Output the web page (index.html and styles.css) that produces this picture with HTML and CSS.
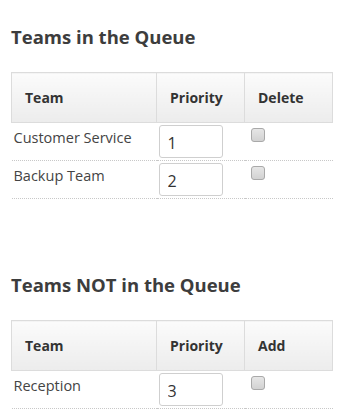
FILE: index.html
```html
<!DOCTYPE html>
<html>
<head>
<meta charset="utf-8">
<link rel="stylesheet" href="styles.css">
</head>
<body>
<div class="page">
  <section class="block">
    <h2 class="title">Teams in the Queue</h2>
    <table class="teams">
      <thead>
        <tr><th class="c-team">Team</th><th class="c-pri">Priority</th><th class="c-act">Delete</th></tr>
      </thead>
      <tbody>
        <tr><td class="name">Customer Service</td><td><input class="pri" type="text" value="1"></td><td><input class="chk" type="checkbox"></td></tr>
        <tr><td class="name">Backup Team</td><td><input class="pri" type="text" value="2"></td><td><input class="chk" type="checkbox"></td></tr>
      </tbody>
    </table>
  </section>
  <section class="block second">
    <h2 class="title">Teams NOT in the Queue</h2>
    <table class="teams">
      <thead>
        <tr><th class="c-team">Team</th><th class="c-pri">Priority</th><th class="c-act">Add</th></tr>
      </thead>
      <tbody>
        <tr><td class="name">Reception</td><td><input class="pri" type="text" value="3"></td><td><input class="chk" type="checkbox"></td></tr>
      </tbody>
    </table>
  </section>
</div>
</body>
</html>
```
FILE: styles.css
```css
html, body {
  margin: 0;
  padding: 0;
  background: #fff;
}
body {
  font-family: "Open Sans", "DejaVu Sans", sans-serif;
  color: #3a3a3a;
}
.page {
  padding: 25px 20px 0 11px;
}
.title {
  margin: 0 0 23px 0;
  font-size: 18.5px;
  line-height: 24px;
  font-weight: 700;
  color: #3d3d3d;
}
.second {
  margin-top: 74px;
}
.teams {
  border-collapse: collapse;
  width: 321px;
  table-layout: fixed;
}
.teams th {
  border: 1px solid #dcdcdc;
  background: linear-gradient(#fbfbfb, #ececec);
  height: 50px;
  padding: 0 0 0 13px;
  text-align: left;
  font-size: 14px;
  font-weight: 700;
  color: #333;
  vertical-align: middle;
  box-sizing: border-box;
}
.c-team { width: 145px; }
.c-pri { width: 88px; }
.c-act { width: 88px; }
.teams td {
  padding: 2px;
  border-bottom: 1px dotted #c8c8c8;
  vertical-align: top;
  font-size: 14.5px;
  line-height: 20px;
  color: #444;
}
.teams td.name {
  padding-top: 5px;
  padding-left: 2px;
}
.pri {
  display: block;
  box-sizing: border-box;
  width: 64px;
  height: 33px;
  margin: 0;
  padding: 3px 8px 0 8px;
  border: 1px solid #cfcfcf;
  border-radius: 3px;
  font-family: "Open Sans", "DejaVu Sans", sans-serif;
  font-size: 16px;
  color: #333;
  background: #fff;
  outline: none;
}
.chk {
  appearance: none;
  -webkit-appearance: none;
  display: block;
  width: 14px;
  height: 14px;
  margin: 3px 0 0 4px;
  border: 1px solid #a9a9a9;
  border-radius: 3px;
  background: linear-gradient(#e6e6e6, #d2d2d2);
  box-sizing: border-box;
}
```
